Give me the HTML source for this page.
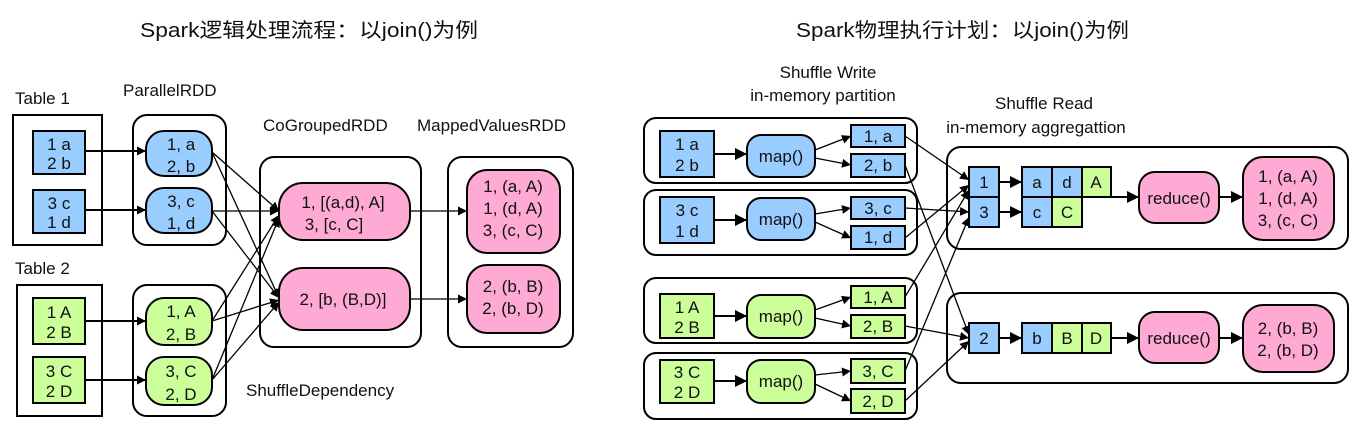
<!DOCTYPE html>
<html><head><meta charset="utf-8"><style>
html,body{margin:0;padding:0;background:#fff}
svg{display:block}
text{font-family:"Liberation Sans","Noto Sans CJK SC",sans-serif;fill:#111}
</style></head><body>
<svg width="1358" height="438" viewBox="0 0 1358 438" xmlns="http://www.w3.org/2000/svg">
<defs>
<marker id="a" viewBox="0 0 10 10" refX="10" refY="5" markerWidth="9" markerHeight="9" markerUnits="userSpaceOnUse" orient="auto"><path d="M0,0L10,5L0,10z" fill="#000"/></marker>
<marker id="b" viewBox="0 0 10 10" refX="10" refY="5" markerWidth="12" markerHeight="12" markerUnits="userSpaceOnUse" orient="auto"><path d="M0,0L10,5L0,10z" fill="#000"/></marker>
</defs>
<text x="140" y="37" font-size="20" textLength="338" lengthAdjust="spacingAndGlyphs">Spark逻辑处理流程：以join()为例</text>
<text x="796" y="37" font-size="20" textLength="333" lengthAdjust="spacingAndGlyphs">Spark物理执行计划：以join()为例</text>

<g font-size="17">
<text x="15" y="104">Table 1</text>
<text x="123" y="96">ParallelRDD</text>
<text x="263" y="131">CoGroupedRDD</text>
<text x="417" y="131">MappedValuesRDD</text>
<text x="15" y="274">Table 2</text>
<text x="246" y="396">ShuffleDependency</text>
</g>

<g fill="none" stroke="#000" stroke-width="2">
<rect x="13" y="115" width="89" height="130"/>
<rect x="17" y="285" width="85" height="131"/>
<rect x="133" y="115" width="93" height="130" rx="14"/>
<rect x="133" y="285" width="93" height="131" rx="14"/>
<rect x="260" y="157" width="161" height="190" rx="14"/>
<rect x="448" y="157" width="125" height="190" rx="14"/>
</g>
<g stroke="#000" stroke-width="2">
<rect x="33" y="131" width="52" height="43" fill="#99ccff"/>
<rect x="33" y="190" width="52" height="43" fill="#99ccff"/>
<rect x="33" y="298" width="52" height="46" fill="#ccff99"/>
<rect x="33" y="357" width="52" height="46" fill="#ccff99"/>
<rect x="146" y="131" width="66" height="45" rx="18" fill="#99ccff"/>
<rect x="146" y="188" width="66" height="45" rx="18" fill="#99ccff"/>
<rect x="146" y="298" width="66" height="47" rx="18" fill="#ccff99"/>
<rect x="146" y="357" width="66" height="48" rx="18" fill="#ccff99"/>
<rect x="279" y="183" width="131" height="57" rx="24" fill="#ffaad4"/>
<rect x="279" y="268" width="131" height="62" rx="24" fill="#ffaad4"/>
<rect x="467" y="170" width="93" height="83" rx="20" fill="#ffaad4"/>
<rect x="467" y="265" width="93" height="68" rx="20" fill="#ffaad4"/>
</g>
<g font-size="17" text-anchor="middle">
<text x="59" y="150">1 a</text><text x="59" y="169">2 b</text>
<text x="59" y="209">3 c</text><text x="59" y="228">1 d</text>
<text x="59" y="318">1 A</text><text x="59" y="338">2 B</text>
<text x="59" y="377">3 C</text><text x="59" y="397">2 D</text>
<text x="181" y="150">1, a</text><text x="181" y="172">2, b</text>
<text x="181" y="207">3, c</text><text x="181" y="229">1, d</text>
<text x="181" y="317">1, A</text><text x="181" y="340">2, B</text>
<text x="181" y="377">3, C</text><text x="181" y="400">2, D</text>
<text x="343" y="208">1, [(a,d), A]</text><text x="334" y="230" >3, [c, C]</text>
<text x="343" y="305">2, [b, (B,D)]</text>
<text x="513" y="192">1, (a, A)</text><text x="513" y="214">1, (d, A)</text><text x="513" y="236">3, (c, C)</text>
<text x="513" y="292">2, (b, B)</text><text x="513" y="314">2, (b, D)</text>
</g>
<g stroke="#000" stroke-width="1.3" fill="none" marker-end="url(#a)">
<path d="M85,151H146" stroke-width="2"/><path d="M85,210H146" stroke-width="2"/>
<path d="M85,321H146" stroke-width="2"/><path d="M85,380H146" stroke-width="2"/>
<path d="M212,152L279,211"/><path d="M212,152L279,298"/>
<path d="M212,211H279"/><path d="M212,211L279,298"/>
<path d="M212,321L279,215"/><path d="M212,321L279,300"/>
<path d="M212,380L279,218"/><path d="M212,380L279,302"/>
<path d="M410,211H467"/><path d="M410,299H467"/>
</g>

<!-- right -->
<g font-size="17" text-anchor="middle">
<text x="828" y="78">Shuffle Write</text>
<text x="823" y="101">in-memory partition</text>
<text x="1044" y="109">Shuffle Read</text>
<text x="1036" y="133">in-memory aggregattion</text>
</g>
<g fill="none" stroke="#000" stroke-width="2">
<rect x="644" y="118" width="273" height="65" rx="12"/>
<rect x="644" y="190" width="273" height="65" rx="12"/>
<rect x="644" y="278" width="273" height="65" rx="12"/>
<rect x="644" y="353" width="273" height="66" rx="12"/>
<rect x="947" y="147" width="401" height="102" rx="14"/>
<rect x="947" y="293" width="401" height="90" rx="14"/>
</g>
<g stroke="#000" stroke-width="2">
<rect x="660" y="131" width="54" height="46" fill="#99ccff"/>
<rect x="660" y="197" width="54" height="46" fill="#99ccff"/>
<rect x="660" y="294" width="54" height="44" fill="#ccff99"/>
<rect x="660" y="360" width="54" height="43" fill="#ccff99"/>
<rect x="747" y="135" width="68" height="42" rx="14" fill="#99ccff"/>
<rect x="747" y="198" width="68" height="42" rx="14" fill="#99ccff"/>
<rect x="747" y="295" width="68" height="43" rx="14" fill="#ccff99"/>
<rect x="747" y="360" width="68" height="43" rx="14" fill="#ccff99"/>
<rect x="851" y="125" width="54" height="22" fill="#99ccff"/>
<rect x="851" y="154" width="54" height="23" fill="#99ccff"/>
<rect x="851" y="197" width="54" height="22" fill="#99ccff"/>
<rect x="851" y="226" width="54" height="23" fill="#99ccff"/>
<rect x="851" y="286" width="54" height="22" fill="#ccff99"/>
<rect x="851" y="315" width="54" height="23" fill="#ccff99"/>
<rect x="851" y="359" width="54" height="24" fill="#ccff99"/>
<rect x="851" y="389" width="54" height="24" fill="#ccff99"/>
<rect x="969" y="167" width="30" height="30" fill="#99ccff"/>
<rect x="969" y="197" width="30" height="30" fill="#99ccff"/>
<rect x="969" y="323" width="30" height="30" fill="#99ccff"/>
<rect x="1022" y="167" width="30" height="30" fill="#99ccff"/>
<rect x="1052" y="167" width="30" height="30" fill="#99ccff"/>
<rect x="1082" y="167" width="29" height="30" fill="#ccff99"/>
<rect x="1022" y="197" width="30" height="30" fill="#99ccff"/>
<rect x="1052" y="197" width="30" height="30" fill="#ccff99"/>
<rect x="1022" y="323" width="30" height="30" fill="#99ccff"/>
<rect x="1052" y="323" width="30" height="30" fill="#ccff99"/>
<rect x="1082" y="323" width="29" height="30" fill="#ccff99"/>
<rect x="1139" y="172" width="80" height="51" rx="16" fill="#ffaad4"/>
<rect x="1139" y="312" width="80" height="51" rx="16" fill="#ffaad4"/>
<rect x="1243" y="157" width="91" height="83" rx="20" fill="#ffaad4"/>
<rect x="1243" y="305" width="91" height="67" rx="20" fill="#ffaad4"/>
</g>
<g font-size="17" text-anchor="middle">
<text x="687" y="150">1 a</text><text x="687" y="171">2 b</text>
<text x="687" y="216">3 c</text><text x="687" y="237">1 d</text>
<text x="687" y="313">1 A</text><text x="687" y="333">2 B</text>
<text x="687" y="378">3 C</text><text x="687" y="398">2 D</text>
<text x="781" y="162">map()</text><text x="781" y="225">map()</text>
<text x="781" y="322">map()</text><text x="781" y="387">map()</text>
<text x="878" y="142">1, a</text><text x="878" y="171">2, b</text>
<text x="878" y="214">3, c</text><text x="878" y="243">1, d</text>
<text x="878" y="303">1, A</text><text x="878" y="332">2, B</text>
<text x="878" y="377">3, C</text><text x="878" y="407">2, D</text>
<text x="984" y="188">1</text><text x="984" y="218">3</text><text x="984" y="344">2</text>
<text x="1037" y="188">a</text><text x="1067" y="188">d</text><text x="1096" y="188">A</text>
<text x="1037" y="218">c</text><text x="1067" y="218">C</text>
<text x="1037" y="344">b</text><text x="1067" y="344">B</text><text x="1096" y="344">D</text>
<text x="1179" y="204">reduce()</text><text x="1179" y="344">reduce()</text>
<text x="1288" y="182">1, (a, A)</text><text x="1288" y="204">1, (d, A)</text><text x="1288" y="226">3, (c, C)</text>
<text x="1288" y="334">2, (b, B)</text><text x="1288" y="356">2, (b, D)</text>
</g>
<g stroke="#000" stroke-width="2" fill="none" marker-end="url(#b)">
<path d="M714,154H747"/><path d="M714,220H747"/><path d="M714,316H747"/><path d="M714,381H747"/>
<path d="M999,182H1022"/><path d="M999,212H1022"/><path d="M999,338H1022"/>
<path d="M1111,197H1139"/><path d="M1111,338H1139"/>
<path d="M1219,197H1243"/><path d="M1219,338H1243"/>
</g>
<g stroke="#000" stroke-width="1.3" fill="none" marker-end="url(#a)">
<path d="M815,150L851,136"/><path d="M815,158L851,165"/>
<path d="M815,214L851,208"/><path d="M815,222L851,238"/>
<path d="M815,310L851,297"/><path d="M815,318L851,326"/>
<path d="M815,375L851,371"/><path d="M815,384L851,401"/>
<path d="M905,136L969,180"/><path d="M905,165L969,335"/>
<path d="M905,208L969,212"/><path d="M905,238L969,185"/>
<path d="M905,297L969,190"/><path d="M905,326L969,338"/>
<path d="M905,371L969,217"/><path d="M905,401L969,341"/>
</g>
</svg>
</body></html>
